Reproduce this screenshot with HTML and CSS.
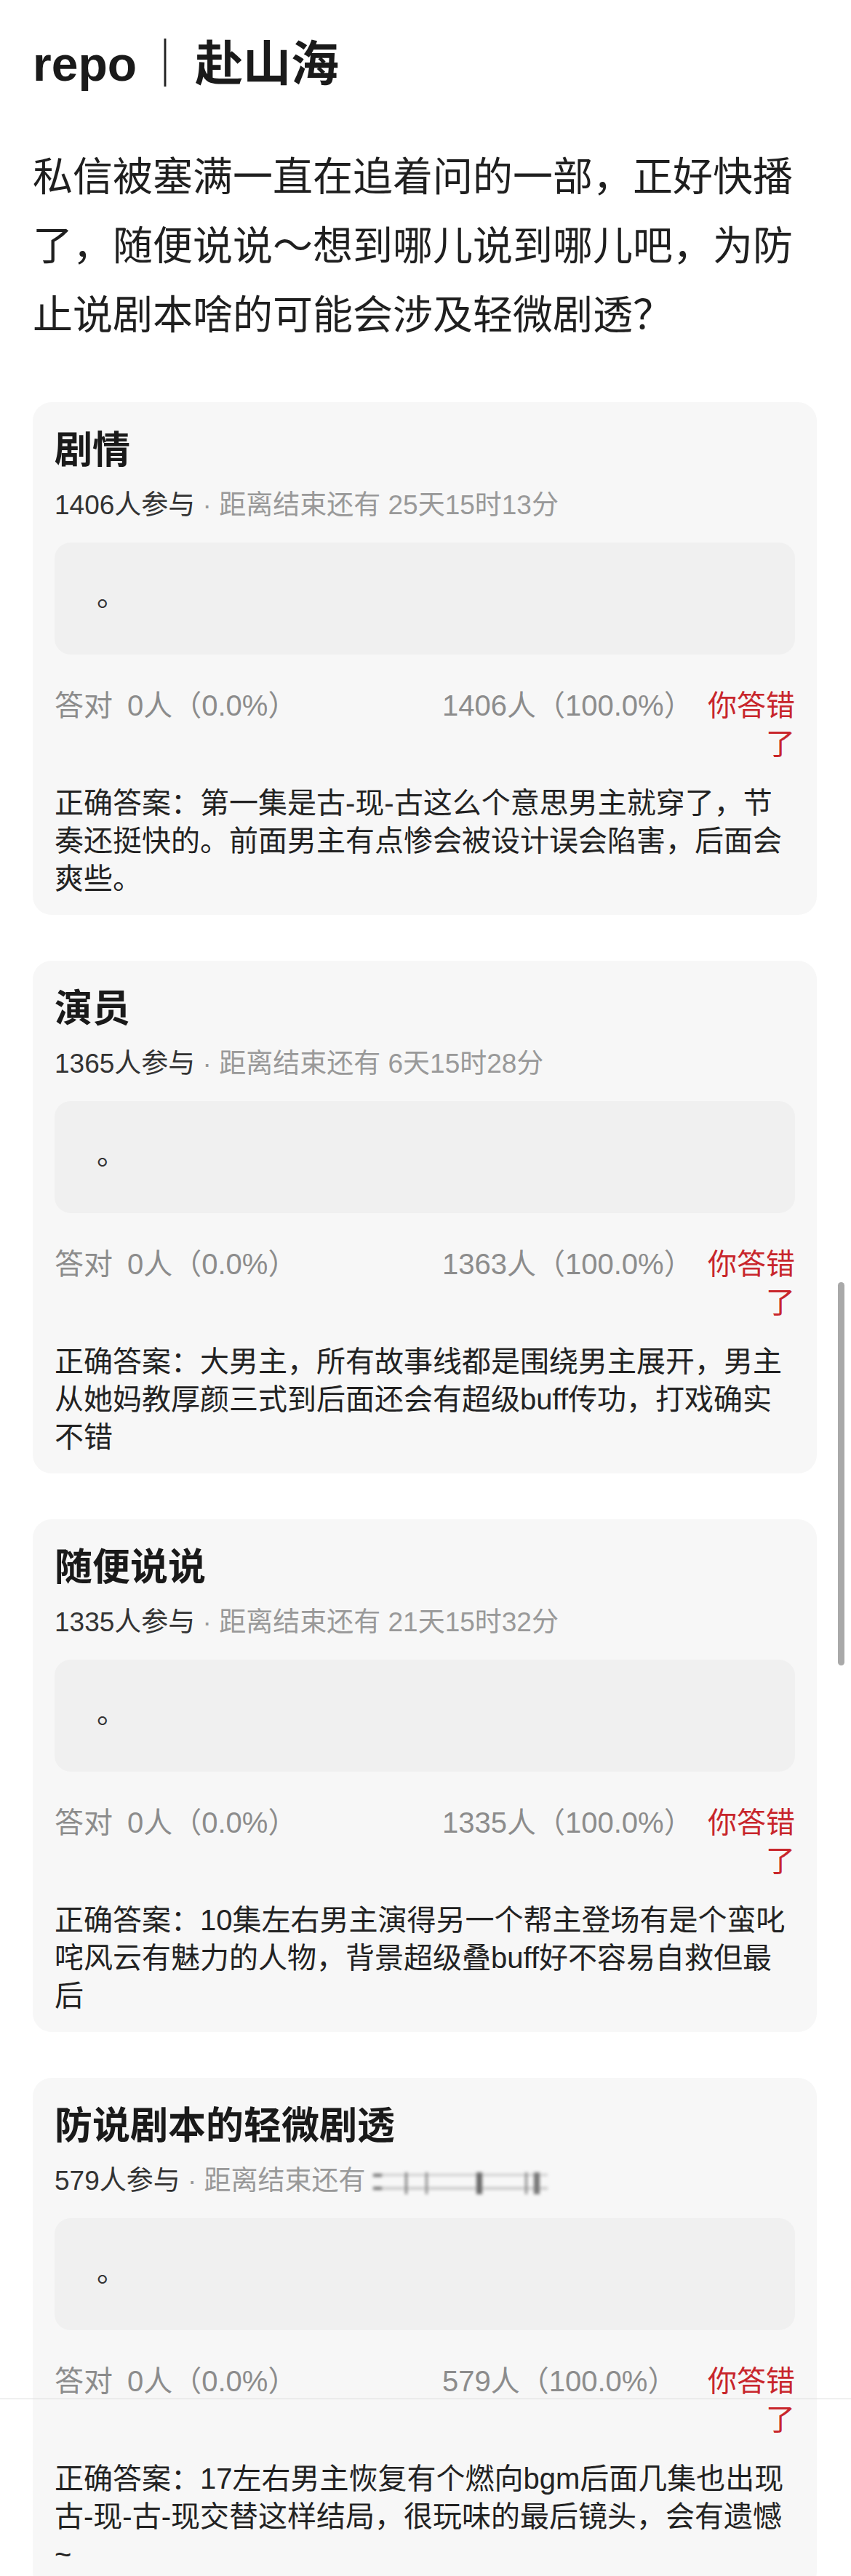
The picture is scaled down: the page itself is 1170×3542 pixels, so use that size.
FILE: index.html
```html
<!DOCTYPE html>
<html lang="zh">
<head>
    <meta charset="UTF-8">
    <title>repo ｜ 赴山海</title>
    <link rel="stylesheet" href="styles.css">
</head>
<body>
    <div class="page">
        <h1 class="head">repo<span class="sep">｜</span>赴山海</h1>
        <p class="intro">私信被塞满一直在追着问的一部，正好快播了，随便说说～想到哪儿说到哪儿吧，为防止说剧本啥的可能会涉及轻微剧透？</p>

        <div class="quiz">
            <h2>剧情</h2>
            <div class="meta"><span class="joined">1406人参与</span> · 距离结束还有 25天15时13分</div>
            <div class="option">。</div>
            <div class="stats">
                <div><span class="label">答对</span>0人（0.0%）</div>
                <div>1406人（100.0%）</div>
                <div class="wrong">你答错了</div>
            </div>
            <p class="answer">正确答案：第一集是古-现-古这么个意思男主就穿了，节奏还挺快的。前面男主有点惨会被设计误会陷害，后面会爽些。</p>
        </div>

        <div class="quiz">
            <h2>演员</h2>
            <div class="meta"><span class="joined">1365人参与</span> · 距离结束还有 6天15时28分</div>
            <div class="option">。</div>
            <div class="stats">
                <div><span class="label">答对</span>0人（0.0%）</div>
                <div>1363人（100.0%）</div>
                <div class="wrong">你答错了</div>
            </div>
            <p class="answer">正确答案：大男主，所有故事线都是围绕男主展开，男主从她妈教厚颜三式到后面还会有超级buff传功，打戏确实不错</p>
        </div>

        <div class="quiz">
            <h2>随便说说</h2>
            <div class="meta"><span class="joined">1335人参与</span> · 距离结束还有 21天15时32分</div>
            <div class="option">。</div>
            <div class="stats">
                <div><span class="label">答对</span>0人（0.0%）</div>
                <div>1335人（100.0%）</div>
                <div class="wrong">你答错了</div>
            </div>
            <p class="answer">正确答案：10集左右男主演得另一个帮主登场有是个蛮叱咤风云有魅力的人物，背景超级叠buff好不容易自救但最后</p>
        </div>

        <div class="quiz">
            <h2>防说剧本的轻微剧透</h2>
            <div class="meta"><span class="joined">579人参与</span> · 距离结束还有 <span class="blurred" aria-hidden="true"></span></div>
            <div class="option">。</div>
            <div class="stats">
                <div><span class="label">答对</span>0人（0.0%）</div>
                <div>579人（100.0%）</div>
                <div class="wrong">你答错了</div>
            </div>
            <p class="answer">正确答案：17左右男主恢复有个燃向bgm后面几集也出现古-现-古-现交替这样结局，很玩味的最后镜头，会有遗憾~</p>
        </div>
    </div>
    <div class="scrollbar"></div>
    <div class="bottom-edge"></div>
</body>
</html>
```

FILE: styles.css
```css
html, body { overflow: hidden; }
body { margin: 0; background: #fff; color: #1f1f1f; font-family: "Liberation Sans", "Noto Sans CJK SC", sans-serif; position: relative; }
.page { padding: 42px 47px 0 45px; }

.head { margin: 0; font-size: 66px; line-height: 92px; font-weight: bold; color: #1a1a1a; }
.sep { font-weight: 500; margin: 0 8px 0 6px; color: #222; }
.intro { margin: 62px 0 0; font-size: 55px; line-height: 95px; color: #1f1f1f; }

.quiz { margin-top: 63px; background: #f7f7f7; border-radius: 26px; padding: 30px 30px 24px; }
.quiz:first-of-type { margin-top: 72px; }
.quiz h2 { margin: 0; font-size: 52px; line-height: 73px; font-weight: bold; color: #1a1a1a; }
.meta { margin-top: 14px; font-size: 37px; line-height: 50px; color: #999; }
.joined { color: #333; }
.option { margin-top: 26px; height: 154px; box-sizing: border-box; padding-left: 58px; background: #f0f0f0; border-radius: 22px; font-size: 40px; line-height: 146px; color: #333; }

.stats { margin-top: 44px; display: grid; grid-template-columns: 533px 1fr 120px; font-size: 40px; line-height: 53px; color: #8c8c8c; }
.label { margin-right: 20px; }
.wrong { color: #c8262c; text-align: right; }
.answer { margin: 28px 0 0; font-size: 40px; line-height: 52px; color: #222; }

/* smeared countdown on the last card */
.blurred { display: inline-block; width: 240px; height: 30px; vertical-align: -6px; filter: blur(2px);
    background:
        linear-gradient(#666, #666) 0 2px / 12px 4px no-repeat,
        linear-gradient(#666, #666) 0 20px / 12px 4px no-repeat,
        linear-gradient(to right, transparent 44px, #7a7a7a 44px 47px, transparent 47px 72px, #888 72px 75px, transparent 75px 142px, #6a6a6a 142px 150px, transparent 150px 209px, #888 209px 212px, transparent 212px 221px, #777 221px 229px, transparent 229px),
        linear-gradient(to bottom, transparent 2px, rgba(120,120,120,.35) 2px 5px, transparent 5px 20px, rgba(120,120,120,.35) 20px 24px, transparent 24px);
}

.scrollbar { position: absolute; left: 1152px; top: 1763px; width: 9px; height: 527px; background: #a9a9a9; border-radius: 5px; }
.bottom-edge { position: absolute; left: 0; right: 0; top: 3298px; height: 1px; background: #dcdcdc; }
```
